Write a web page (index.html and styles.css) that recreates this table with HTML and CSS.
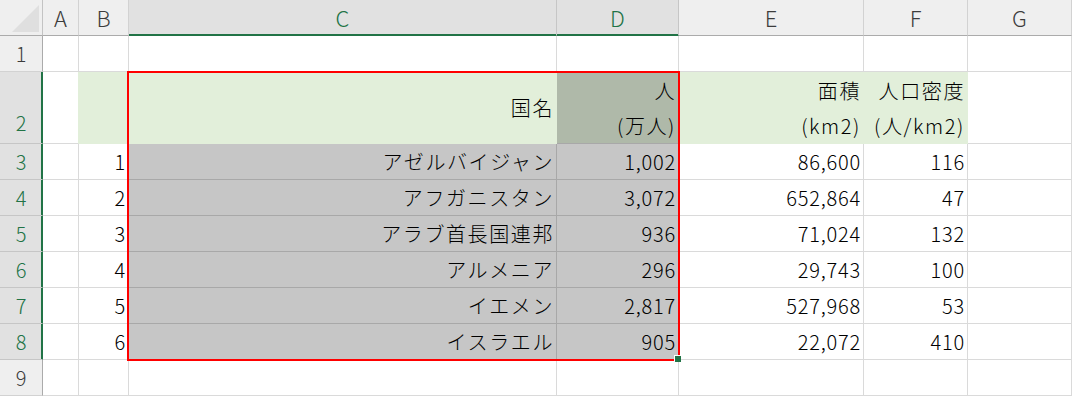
FILE: index.html
```html
<!DOCTYPE html>
<html lang="ja">
<head>
<meta charset="utf-8">
<link rel="stylesheet" href="styles.css">
</head>
<body>
<div class="wrap">
  <div class="sheet">
    <!-- header row -->
    <div class="corner"><svg width="42" height="35" viewBox="0 0 42 35"><polygon points="12,32 39,5 39,32" fill="#dfdfdf"/></svg></div>
    <div class="ch">A</div>
    <div class="ch">B</div>
    <div class="ch on">C</div>
    <div class="ch on">D</div>
    <div class="ch">E</div>
    <div class="ch">F</div>
    <div class="ch">G</div>

    <!-- row 1 -->
    <div class="rh">1</div>
    <div class="c"></div><div class="c"></div><div class="c"></div><div class="c"></div><div class="c"></div><div class="c"></div><div class="c"></div>

    <!-- row 2 -->
    <div class="rh on tall">2</div>
    <div class="c a2"></div>
    <div class="c g"></div>
    <div class="c g r"><span class="ja">国名</span></div>
    <div class="c sg r two"><span class="ja">人</span><span class="ja">(万人)</span></div>
    <div class="c g r two"><span class="ja">面積</span><span class="ja">(km2)</span></div>
    <div class="c g r two"><span class="ja">人口密度</span><span class="ja">(人/km2)</span></div>
    <div class="c"></div>

    <!-- row 3 -->
    <div class="rh on">3</div>
    <div class="c"></div>
    <div class="c r"><span class="n">1</span></div>
    <div class="c s r"><span class="ja">アゼルバイジャン</span></div>
    <div class="c s r"><span class="n">1,002</span></div>
    <div class="c r"><span class="n">86,600</span></div>
    <div class="c r"><span class="n">116</span></div>
    <div class="c"></div>

    <!-- row 4 -->
    <div class="rh on">4</div>
    <div class="c"></div>
    <div class="c r"><span class="n">2</span></div>
    <div class="c s r"><span class="ja">アフガニスタン</span></div>
    <div class="c s r"><span class="n">3,072</span></div>
    <div class="c r"><span class="n">652,864</span></div>
    <div class="c r"><span class="n">47</span></div>
    <div class="c"></div>

    <!-- row 5 -->
    <div class="rh on">5</div>
    <div class="c"></div>
    <div class="c r"><span class="n">3</span></div>
    <div class="c s r"><span class="ja">アラブ首長国連邦</span></div>
    <div class="c s r"><span class="n">936</span></div>
    <div class="c r"><span class="n">71,024</span></div>
    <div class="c r"><span class="n">132</span></div>
    <div class="c"></div>

    <!-- row 6 -->
    <div class="rh on">6</div>
    <div class="c"></div>
    <div class="c r"><span class="n">4</span></div>
    <div class="c s r"><span class="ja">アルメニア</span></div>
    <div class="c s r"><span class="n">296</span></div>
    <div class="c r"><span class="n">29,743</span></div>
    <div class="c r"><span class="n">100</span></div>
    <div class="c"></div>

    <!-- row 7 -->
    <div class="rh on">7</div>
    <div class="c"></div>
    <div class="c r"><span class="n">5</span></div>
    <div class="c s r"><span class="ja">イエメン</span></div>
    <div class="c s r"><span class="n">2,817</span></div>
    <div class="c r"><span class="n">527,968</span></div>
    <div class="c r"><span class="n">53</span></div>
    <div class="c"></div>

    <!-- row 8 -->
    <div class="rh on">8</div>
    <div class="c"></div>
    <div class="c r"><span class="n">6</span></div>
    <div class="c s r"><span class="ja">イスラエル</span></div>
    <div class="c s r"><span class="n">905</span></div>
    <div class="c r"><span class="n">22,072</span></div>
    <div class="c r"><span class="n">410</span></div>
    <div class="c"></div>

    <!-- row 9 -->
    <div class="rh">9</div>
    <div class="c"></div><div class="c"></div><div class="c"></div><div class="c"></div><div class="c"></div><div class="c"></div><div class="c"></div>
  </div>
  <div class="selection"></div>
  <div class="handle"></div>
</div>
</body>
</html>
```

FILE: styles.css
```css
html, body {
  margin: 0;
  padding: 0;
  background: #ffffff;
}

.wrap {
  position: relative;
  width: 1072px;
  height: 396px;
  overflow: hidden;
  font-family: "Noto Sans CJK JP", "Noto Sans", sans-serif;
  font-weight: 300;
  color: #000000;
}

.sheet {
  display: grid;
  grid-template-columns: 43px 36px 50px 428px 122px 185px 104px 104px;
  grid-template-rows: 36px 36px 72px repeat(7, 36px);
}

.sheet > div {
  box-sizing: border-box;
  border-right: 1px solid #dadada;
  border-bottom: 1px solid #dadada;
  display: flex;
  align-items: center;
  overflow: hidden;
  white-space: nowrap;
}

.corner {
  background: #efefef;
  border-right-color: #c3c3c3 !important;
  border-bottom-color: #ababab !important;
  align-items: flex-start !important;
}

.corner svg {
  display: block;
}

.ch {
  background: #efefef;
  border-right-color: #d2d2d2 !important;
  border-bottom-color: #ababab !important;
  justify-content: center;
  font-size: 22px;
  color: #3c3c3c;
  line-height: 1;
  padding-bottom: 1px;
}

.ch.on {
  background: #e1e1e1;
  color: #217346;
  border-right-color: #c6c6c6 !important;
  border-bottom-color: #217346 !important;
  box-shadow: inset 0 -1px 0 #217346;
}

.rh {
  background: #efefef;
  border-right-color: #ababab !important;
  border-bottom-color: #d2d2d2 !important;
  justify-content: center;
  font-size: 20px;
  color: #3c3c3c;
  line-height: 1;
}

.rh.on {
  background: #e1e1e1;
  color: #217346;
  border-right-color: #217346 !important;
  box-shadow: inset -1px 0 0 #217346;
  border-bottom-color: #c6c6c6 !important;
}

.rh.tall {
  align-items: flex-end;
  padding-bottom: 10px;
}

.c {
  background: #ffffff;
  font-size: 20px;
  line-height: 1;
  padding-right: 2px;
}

.r {
  justify-content: flex-end;
}

.a2 {
  border-right-color: #e2efda !important;
}

.g {
  background: #e2efda;
  border-right-color: #e2efda !important;
  border-bottom-color: #e2efda !important;
}

.s {
  background: #c6c6c6;
  border-right-color: #a8a8a8 !important;
  border-bottom-color: #a8a8a8 !important;
}

.sg {
  background: #afb9a9;
  border-right-color: #afb9a9 !important;
  border-bottom-color: #a8a8a8 !important;
}

.two {
  flex-direction: column;
  align-items: flex-end !important;
  justify-content: center;
}

.two .ja {
  display: block;
  line-height: 35px;
}

.ja {
  letter-spacing: 1.6px;
}

.n {
  letter-spacing: 0.8px;
}

.selection {
  position: absolute;
  left: 127px;
  top: 71px;
  width: 553px;
  height: 290px;
  box-sizing: border-box;
  border: 2px solid #ff0000;
  pointer-events: none;
}

.handle {
  position: absolute;
  left: 675px;
  top: 356px;
  width: 6px;
  height: 6px;
  background: #217346;
  box-shadow: -1px -1px 0 #ffffff;
}
```
